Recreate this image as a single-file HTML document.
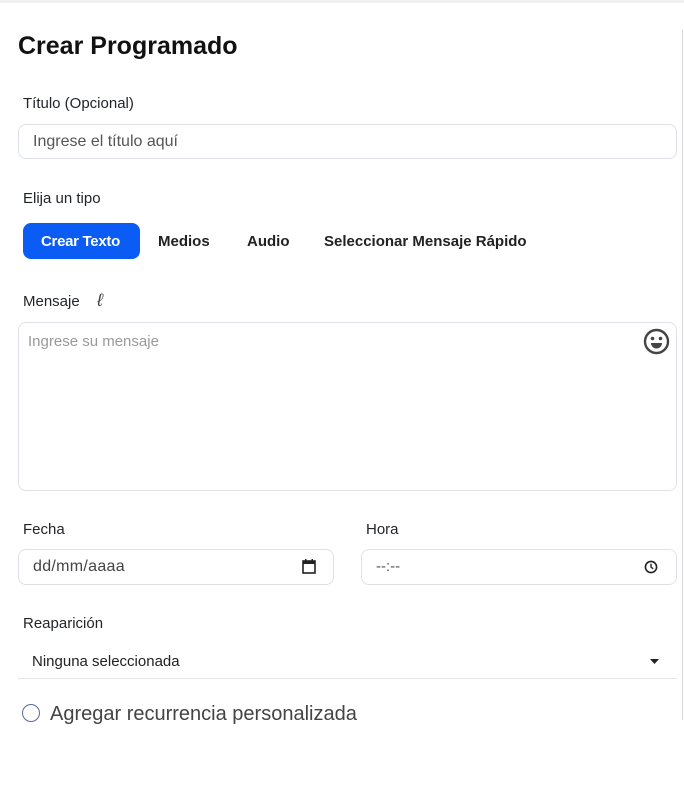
<!DOCTYPE html>
<html><head><meta charset="utf-8"><style>
*{box-sizing:border-box;margin:0;padding:0}
body{width:684px;height:798px;background:#fff;font-family:"Liberation Sans",sans-serif;color:#212529;position:relative;overflow:hidden}
.a{position:absolute;white-space:nowrap}
.t{transform-origin:left center}
.box{position:absolute;border:1px solid #dee2e6;border-radius:8px;background:#fff}
.lbl{font-size:15px;color:#212529}
</style></head><body>
<div class="a" style="left:0;top:0;width:684px;height:3px;background:#f1f1f1"></div>
<div class="a" style="left:682px;top:30px;width:1px;height:690px;background:#d8d8d8"></div>
<div class="a t" style="left:18px;top:32px;font-size:25px;font-weight:bold;color:#111">Crear Programado</div>
<div class="a t lbl" style="left:23px;top:95px">Título (Opcional)</div>
<div class="box" style="left:18px;top:124px;width:659px;height:35px"></div>
<div class="a t" style="left:33px;top:133px;font-size:16px;color:#555">Ingrese el título aquí</div>
<div class="a t lbl" style="left:23px;top:190px">Elija un tipo</div>
<div class="a" style="left:23px;top:223px;width:117px;height:36px;background:#0a5cf5;border-radius:8px"></div>
<div class="a t" style="left:41px;top:233px;font-size:15px;font-weight:bold;color:#fff;letter-spacing:-0.3px">Crear Texto</div>
<div class="a t" style="left:158px;top:233px;font-size:15px;font-weight:bold;color:#222">Medios</div>
<div class="a t" style="left:247px;top:233px;font-size:15px;font-weight:bold;color:#222">Audio</div>
<div class="a t" style="left:324px;top:233px;font-size:15px;font-weight:bold;color:#222">Seleccionar Mensaje Rápido</div>
<div class="a t lbl" style="left:23px;top:293px">Mensaje</div>
<div class="a" style="left:97px;top:290px;font-size:18px;font-style:italic;color:#444">ℓ</div>
<div class="box" style="left:18px;top:322px;width:659px;height:169px"></div>
<div class="a t" style="left:28px;top:333px;font-size:15px;color:#999">Ingrese su mensaje</div>
<svg class="a" style="left:643px;top:328px" width="27" height="27" viewBox="0 0 27 27"><circle cx="13.5" cy="13.5" r="11.5" fill="none" stroke="#444" stroke-width="2.4"/><circle cx="9.5" cy="10.5" r="1.8" fill="#444"/><circle cx="17.5" cy="10.5" r="1.8" fill="#444"/><path d="M8 15h11a5.5 5.5 0 0 1-11 0z" fill="#444"/></svg>
<div class="a t lbl" style="left:23px;top:521px">Fecha</div>
<div class="a t lbl" style="left:366px;top:521px">Hora</div>
<div class="box" style="left:18px;top:549px;width:316px;height:36px"></div>
<div class="a" style="left:33px;top:558px;font-size:16px;color:#444;letter-spacing:0.3px">dd/mm/aaaa</div>
<svg class="a" style="left:302px;top:559px" width="14" height="15" viewBox="0 0 14 15"><rect x="1" y="2" width="12" height="12" fill="none" stroke="#222" stroke-width="1.6"/><rect x="1" y="2" width="12" height="3" fill="#222"/><rect x="3" y="0" width="1.5" height="3" fill="#222"/><rect x="9.5" y="0" width="1.5" height="3" fill="#222"/></svg>
<div class="box" style="left:361px;top:549px;width:316px;height:36px"></div>
<div class="a" style="left:376px;top:558px;font-size:15px;color:#555">--:--</div>
<svg class="a" style="left:644px;top:560px" width="14" height="14" viewBox="0 0 14 14"><circle cx="7" cy="7" r="5.6" fill="none" stroke="#222" stroke-width="1.6"/><path d="M7 3.8V7l2.2 1.8" fill="none" stroke="#222" stroke-width="1.4"/></svg>
<div class="a t lbl" style="left:23px;top:615px">Reaparición</div>
<div class="a" style="left:18px;top:678px;width:659px;height:1px;background:#e6e6e6"></div>
<div class="a t" style="left:32px;top:653px;font-size:15px;color:#222">Ninguna seleccionada</div>
<svg class="a" style="left:650px;top:659px" width="9" height="6" viewBox="0 0 9 6"><path d="M0 0h9L4.5 5z" fill="#222"/></svg>
<div class="a" style="left:22px;top:704px;width:18px;height:18px;border:1.5px solid #5a6a9a;border-radius:50%"></div>
<div class="a t" style="left:50px;top:703px;font-size:20px;color:#444">Agregar recurrencia personalizada</div>
</body></html>
